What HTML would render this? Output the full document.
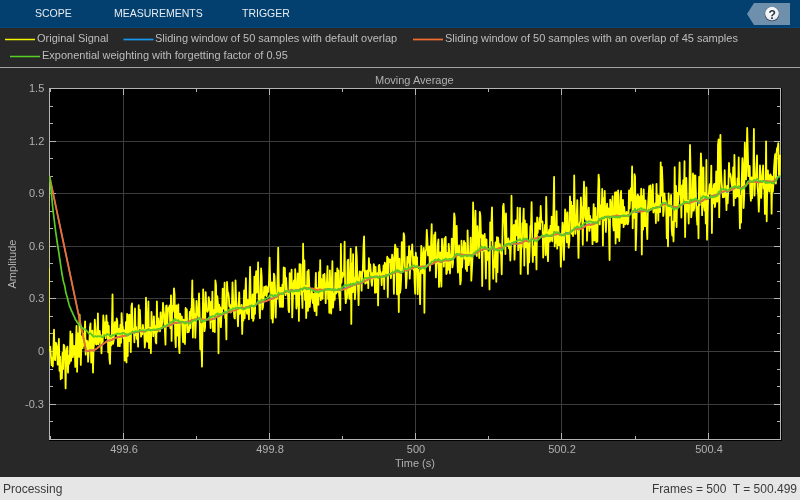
<!DOCTYPE html>
<html><head><meta charset="utf-8">
<style>
html,body{-webkit-font-smoothing:antialiased;margin:0;padding:0;width:800px;height:500px;overflow:hidden;background:#282828;font-family:"Liberation Sans",sans-serif;}
.tb{position:absolute;left:0;top:0;width:800px;height:28px;background:#03406f;}
.tab{position:absolute;top:7px;font-size:10.5px;color:#e6ecf2;line-height:12px;will-change:transform;}
.leg{position:absolute;font-size:11px;color:#bdbdbd;line-height:12px;white-space:nowrap;will-change:transform;}
.sw{position:absolute;height:2px;}
.sep{position:absolute;left:0;top:67px;width:800px;height:1px;background:#a4a4a4;}
.lbl{position:absolute;font-size:11px;color:#b0b0b0;line-height:12px;white-space:nowrap;will-change:transform;}
.status{position:absolute;left:0;top:477px;width:800px;height:23px;background:#e6e6e6;}
.st{position:absolute;font-size:12px;color:#3a3a3a;line-height:14px;white-space:nowrap;top:482px;will-change:transform;}
</style></head><body>
<div class="tb"></div><div style="position:absolute;left:0;top:27px;width:800px;height:1px;background:#05477f"></div><div style="position:absolute;left:0;top:28px;width:800px;height:1px;background:#2b2725"></div>
<div class="tab" style="left:35px">SCOPE</div>
<div class="tab" style="left:114px">MEASUREMENTS</div>
<div class="tab" style="left:242px">TRIGGER</div>
<svg style="position:absolute;left:0;top:0" width="800" height="30">
  <polygon points="754,3 790,3 790,25 754,25 747,14" fill="#6f90ad"/>
  <defs><radialGradient id="hg" cx="0.45" cy="0.35" r="0.75"><stop offset="0" stop-color="#ffffff"/><stop offset="0.7" stop-color="#eceef0"/><stop offset="1" stop-color="#b8c0c8"/></radialGradient></defs>
  <circle cx="772" cy="14" r="7.3" fill="#2a3c52"/>
  <circle cx="772" cy="13.6" r="6.9" fill="url(#hg)"/>
  <text x="772.2" y="18.7" font-family="Liberation Sans" font-weight="bold" font-size="13.5" fill="#223246" text-anchor="middle" transform="translate(772.2 0) scale(0.9 1) translate(-772.2 0)">?</text>
</svg>

<svg style="position:absolute;left:0;top:28px" width="800" height="40">
  <g stroke-width="1.7" stroke-linecap="butt">
  <line x1="5" y1="11.5" x2="35" y2="11.5" stroke="#f5f500" stroke-width="1.5"/>
  <line x1="123.5" y1="11.5" x2="153.5" y2="11.5" stroke="#1898f0"/>
  <line x1="413" y1="11.5" x2="443" y2="11.5" stroke="#f26d2e"/>
  <line x1="10" y1="28.5" x2="40" y2="28.5" stroke="#58d020" stroke-width="1.5"/>
  </g>
</svg>
<div class="leg" style="left:37px;top:32px">Original Signal</div>
<div class="leg" style="left:155px;top:32px">Sliding window of 50 samples with default overlap</div>
<div class="leg" style="left:444.5px;top:32px">Sliding window of 50 samples with an overlap of 45 samples</div>
<div class="leg" style="left:42px;top:49px">Exponential weighting with forgetting factor of 0.95</div>
<div class="sep"></div>

<div class="lbl" style="left:375px;top:74px">Moving Average</div>

<svg style="position:absolute;left:0;top:0" width="800" height="477" shape-rendering="crispEdges">
  <rect x="49" y="88" width="733" height="353" fill="#000"/>
  <g stroke="#3c3c3c" stroke-width="1"><line x1="123.5" y1="88" x2="123.5" y2="439"/><line x1="269.5" y1="88" x2="269.5" y2="439"/><line x1="415.5" y1="88" x2="415.5" y2="439"/><line x1="561.5" y1="88" x2="561.5" y2="439"/><line x1="708.5" y1="88" x2="708.5" y2="439"/><line x1="49" y1="141.5" x2="780" y2="141.5"/><line x1="49" y1="193.5" x2="780" y2="193.5"/><line x1="49" y1="246.5" x2="780" y2="246.5"/><line x1="49" y1="298.5" x2="780" y2="298.5"/><line x1="49" y1="351.5" x2="780" y2="351.5"/><line x1="49" y1="404.5" x2="780" y2="404.5"/></g>
  <g stroke="#b4b4b4" stroke-width="1"><line x1="50" y1="439.5" x2="53" y2="439.5"/><line x1="777" y1="439.5" x2="780" y2="439.5"/><line x1="50" y1="421.5" x2="53" y2="421.5"/><line x1="777" y1="421.5" x2="780" y2="421.5"/><line x1="50" y1="404.5" x2="56" y2="404.5"/><line x1="774" y1="404.5" x2="780" y2="404.5"/><line x1="50" y1="386.5" x2="53" y2="386.5"/><line x1="777" y1="386.5" x2="780" y2="386.5"/><line x1="50" y1="369.5" x2="53" y2="369.5"/><line x1="777" y1="369.5" x2="780" y2="369.5"/><line x1="50" y1="351.5" x2="56" y2="351.5"/><line x1="774" y1="351.5" x2="780" y2="351.5"/><line x1="50" y1="333.5" x2="53" y2="333.5"/><line x1="777" y1="333.5" x2="780" y2="333.5"/><line x1="50" y1="316.5" x2="53" y2="316.5"/><line x1="777" y1="316.5" x2="780" y2="316.5"/><line x1="50" y1="298.5" x2="56" y2="298.5"/><line x1="774" y1="298.5" x2="780" y2="298.5"/><line x1="50" y1="281.5" x2="53" y2="281.5"/><line x1="777" y1="281.5" x2="780" y2="281.5"/><line x1="50" y1="263.5" x2="53" y2="263.5"/><line x1="777" y1="263.5" x2="780" y2="263.5"/><line x1="50" y1="246.5" x2="56" y2="246.5"/><line x1="774" y1="246.5" x2="780" y2="246.5"/><line x1="50" y1="228.5" x2="53" y2="228.5"/><line x1="777" y1="228.5" x2="780" y2="228.5"/><line x1="50" y1="211.5" x2="53" y2="211.5"/><line x1="777" y1="211.5" x2="780" y2="211.5"/><line x1="50" y1="193.5" x2="56" y2="193.5"/><line x1="774" y1="193.5" x2="780" y2="193.5"/><line x1="50" y1="176.5" x2="53" y2="176.5"/><line x1="777" y1="176.5" x2="780" y2="176.5"/><line x1="50" y1="158.5" x2="53" y2="158.5"/><line x1="777" y1="158.5" x2="780" y2="158.5"/><line x1="50" y1="141.5" x2="56" y2="141.5"/><line x1="774" y1="141.5" x2="780" y2="141.5"/><line x1="50" y1="123.5" x2="53" y2="123.5"/><line x1="777" y1="123.5" x2="780" y2="123.5"/><line x1="50" y1="106.5" x2="53" y2="106.5"/><line x1="777" y1="106.5" x2="780" y2="106.5"/><line x1="50" y1="88.5" x2="56" y2="88.5"/><line x1="774" y1="88.5" x2="780" y2="88.5"/><line x1="50.5" y1="436" x2="50.5" y2="439"/><line x1="50.5" y1="89" x2="50.5" y2="92"/><line x1="123.5" y1="433" x2="123.5" y2="439"/><line x1="123.5" y1="89" x2="123.5" y2="95"/><line x1="196.5" y1="436" x2="196.5" y2="439"/><line x1="196.5" y1="89" x2="196.5" y2="92"/><line x1="269.5" y1="433" x2="269.5" y2="439"/><line x1="269.5" y1="89" x2="269.5" y2="95"/><line x1="342.5" y1="436" x2="342.5" y2="439"/><line x1="342.5" y1="89" x2="342.5" y2="92"/><line x1="415.5" y1="433" x2="415.5" y2="439"/><line x1="415.5" y1="89" x2="415.5" y2="95"/><line x1="488.5" y1="436" x2="488.5" y2="439"/><line x1="488.5" y1="89" x2="488.5" y2="92"/><line x1="561.5" y1="433" x2="561.5" y2="439"/><line x1="561.5" y1="89" x2="561.5" y2="95"/><line x1="635.5" y1="436" x2="635.5" y2="439"/><line x1="635.5" y1="89" x2="635.5" y2="92"/><line x1="708.5" y1="433" x2="708.5" y2="439"/><line x1="708.5" y1="89" x2="708.5" y2="95"/></g>
</svg>
<svg style="position:absolute;left:0;top:0" width="800" height="477" shape-rendering="crispEdges">
  <g fill="none" stroke="#b4b4b4" stroke-width="1">
    <rect x="49.5" y="88.5" width="731" height="351"/>
  </g>
</svg>
<svg style="position:absolute;left:0;top:0" width="800" height="477">
  <defs><clipPath id="cp"><rect x="49" y="88" width="732" height="352"/></clipPath></defs>
  <g clip-path="url(#cp)" fill="none" stroke-linejoin="round">
    <line x1="49.5" y1="176" x2="49.5" y2="268" stroke="#ffff00" stroke-opacity="0.2" stroke-width="1"/><line x1="49.5" y1="268" x2="49.5" y2="351" stroke="#ffff00" stroke-opacity="0.7" stroke-width="1"/>
    <path d="M49.7,351.5 50.3,346.7 50.9,355.6 51.6,365.1 52.2,358.2 52.8,366.5 53.4,349.8 54.0,329.7 54.6,358.3 55.2,360.1 55.8,342.6 56.4,344.6 57.0,348.4 57.7,364.6 58.3,350.3 58.9,338.8 59.5,370.8 60.1,356.7 60.7,379.3 61.3,369.6 61.9,378.2 62.5,352.9 63.1,369.0 63.7,344.7 64.4,346.4 65.0,351.8 65.6,388.4 66.2,357.1 66.8,349.3 67.4,346.7 68.0,372.6 68.6,355.9 69.2,363.7 69.8,361.0 70.4,331.3 71.1,360.8 71.7,348.5 72.3,333.9 72.9,357.1 73.5,349.5 74.1,345.9 74.7,346.6 75.3,366.9 75.9,346.2 76.5,325.8 77.1,371.8 77.8,333.4 78.4,344.9 79.0,356.8 79.6,314.6 80.2,334.0 80.8,364.9 81.4,344.5 82.0,336.2 82.6,348.1 83.2,334.0 83.8,345.7 84.5,333.8 85.1,321.3 85.7,354.7 86.3,340.4 86.9,350.8 87.5,341.1 88.1,361.8 88.7,351.8 89.3,345.5 89.9,327.7 90.5,323.5 91.2,362.6 91.8,353.9 92.4,330.6 93.0,372.5 93.6,347.8 94.2,341.6 94.8,319.6 95.4,328.3 96.0,344.2 96.6,344.5 97.2,342.2 97.9,313.4 98.5,344.3 99.1,341.9 99.7,331.0 100.3,338.2 100.9,339.0 101.5,353.3 102.1,335.2 102.7,341.7 103.3,315.5 103.9,323.3 104.6,333.8 105.2,322.3 105.8,338.1 106.4,315.3 107.0,331.9 107.6,322.3 108.2,352.3 108.8,325.8 109.4,358.5 110.0,363.9 110.6,335.9 111.3,345.4 111.9,328.1 112.5,294.4 113.1,343.9 113.7,340.4 114.3,326.9 114.9,322.2 115.5,332.9 116.1,333.2 116.7,318.4 117.3,321.2 118.0,346.2 118.6,330.7 119.2,328.7 119.8,346.2 120.4,324.8 121.0,342.8 121.6,313.1 122.2,325.5 122.8,327.1 123.4,338.0 124.0,330.2 124.7,360.6 125.3,346.4 125.9,322.1 126.5,362.4 127.1,314.0 127.7,356.0 128.3,315.2 128.9,341.1 129.5,314.6 130.1,325.0 130.8,352.0 131.4,306.6 132.0,303.4 132.6,327.8 133.2,331.1 133.8,329.1 134.4,342.3 135.0,308.4 135.6,335.0 136.2,326.9 136.8,338.9 137.5,336.1 138.1,346.7 138.7,305.2 139.3,328.2 139.9,309.8 140.5,325.3 141.1,336.7 141.7,330.6 142.3,334.4 142.9,325.0 143.5,331.2 144.2,329.9 144.8,347.5 145.4,338.1 146.0,297.7 146.6,335.7 147.2,341.9 147.8,319.0 148.4,301.4 149.0,348.2 149.6,327.7 150.2,334.6 150.9,353.1 151.5,312.0 152.1,324.4 152.7,322.8 153.3,336.2 153.9,316.3 154.5,332.6 155.1,326.0 155.7,341.8 156.3,343.5 156.9,301.4 157.6,331.7 158.2,318.4 158.8,323.6 159.4,330.2 160.0,331.2 160.6,312.4 161.2,327.6 161.8,325.0 162.4,322.0 163.0,302.9 163.6,310.9 164.3,315.7 164.9,331.2 165.5,344.6 166.1,305.9 166.7,305.5 167.3,323.7 167.9,312.2 168.5,308.1 169.1,307.1 169.7,305.5 170.3,328.1 171.0,295.3 171.6,340.9 172.2,305.8 172.8,311.7 173.4,305.3 174.0,288.4 174.6,294.8 175.2,338.3 175.8,347.1 176.4,305.4 177.0,335.6 177.7,318.8 178.3,304.5 178.9,345.6 179.5,353.2 180.1,313.6 180.7,317.0 181.3,321.6 181.9,316.7 182.5,331.5 183.1,342.3 183.7,319.7 184.4,332.9 185.0,343.9 185.6,307.9 186.2,317.2 186.8,309.3 187.4,332.4 188.0,326.7 188.6,332.2 189.2,330.1 189.8,311.9 190.4,328.0 191.1,308.8 191.7,308.9 192.3,280.5 192.9,337.5 193.5,299.2 194.1,315.4 194.7,314.0 195.3,337.8 195.9,321.1 196.5,300.8 197.1,314.5 197.8,311.6 198.4,317.7 199.0,293.3 199.6,312.9 200.2,349.3 200.8,323.9 201.4,345.2 202.0,366.6 202.6,320.8 203.2,289.3 203.9,310.8 204.5,331.2 205.1,327.2 205.7,292.2 206.3,308.5 206.9,310.2 207.5,311.8 208.1,310.2 208.7,297.1 209.3,301.3 209.9,306.9 210.6,328.0 211.2,301.7 211.8,321.7 212.4,291.6 213.0,331.4 213.6,312.2 214.2,309.9 214.8,332.1 215.4,280.5 216.0,284.8 216.6,317.2 217.3,296.2 217.9,302.7 218.5,353.3 219.1,304.7 219.7,310.0 220.3,307.5 220.9,327.1 221.5,313.4 222.1,311.8 222.7,288.6 223.3,303.1 224.0,308.8 224.6,282.7 225.2,318.0 225.8,315.2 226.4,339.4 227.0,281.8 227.6,292.1 228.2,292.8 228.8,297.0 229.4,306.4 230.0,304.6 230.7,312.5 231.3,311.6 231.9,307.2 232.5,282.3 233.1,298.5 233.7,308.9 234.3,317.7 234.9,318.6 235.5,280.3 236.1,299.0 236.7,306.4 237.4,313.4 238.0,326.3 238.6,308.4 239.2,292.3 239.8,313.8 240.4,310.9 241.0,310.7 241.6,305.0 242.2,333.9 242.8,310.3 243.4,320.5 244.1,290.3 244.7,318.3 245.3,294.8 245.9,278.2 246.5,309.3 247.1,313.8 247.7,299.8 248.3,302.7 248.9,319.3 249.5,294.0 250.1,266.9 250.8,305.5 251.4,304.1 252.0,318.2 252.6,294.4 253.2,320.9 253.8,318.0 254.4,276.6 255.0,313.8 255.6,279.2 256.2,271.1 256.8,292.5 257.5,287.0 258.1,262.5 258.7,299.1 259.3,305.5 259.9,318.2 260.5,293.7 261.1,268.5 261.7,277.0 262.3,309.4 262.9,307.5 263.5,301.0 264.2,286.9 264.8,295.3 265.4,287.8 266.0,286.2 266.6,296.2 267.2,291.6 267.8,287.1 268.4,291.9 269.0,281.5 269.6,257.6 270.2,279.5 270.9,288.6 271.5,318.5 272.1,282.4 272.7,322.6 273.3,313.1 273.9,273.6 274.5,276.0 275.1,290.6 275.7,317.5 276.3,294.0 277.0,299.1 277.6,276.1 278.2,247.7 278.8,282.9 279.4,300.2 280.0,307.0 280.6,287.6 281.2,289.8 281.8,306.8 282.4,284.7 283.0,306.8 283.7,267.4 284.3,268.3 284.9,267.9 285.5,295.1 286.1,277.9 286.7,289.2 287.3,293.7 287.9,292.9 288.5,309.7 289.1,312.2 289.7,273.2 290.4,290.4 291.0,283.3 291.6,269.6 292.2,317.4 292.8,300.9 293.4,284.1 294.0,280.3 294.6,293.8 295.2,269.2 295.8,283.6 296.4,308.5 297.1,303.6 297.7,273.3 298.3,279.4 298.9,320.9 299.5,264.1 300.1,277.3 300.7,264.3 301.3,294.7 301.9,293.2 302.5,307.9 303.1,243.7 303.8,291.4 304.4,260.5 305.0,299.9 305.6,285.7 306.2,318.1 306.8,295.5 307.4,271.5 308.0,310.8 308.6,269.8 309.2,282.8 309.8,307.0 310.5,297.5 311.1,296.7 311.7,289.4 312.3,298.0 312.9,303.1 313.5,293.8 314.1,306.6 314.7,311.2 315.3,289.2 315.9,272.8 316.5,315.3 317.2,288.1 317.8,299.4 318.4,304.9 319.0,272.2 319.6,296.2 320.2,260.2 320.8,300.2 321.4,279.2 322.0,289.8 322.6,298.8 323.2,274.8 323.9,287.6 324.5,273.9 325.1,285.1 325.7,303.2 326.3,285.5 326.9,282.5 327.5,266.1 328.1,298.9 328.7,283.2 329.3,312.8 329.9,270.4 330.6,300.9 331.2,313.5 331.8,282.2 332.4,261.2 333.0,307.7 333.6,299.7 334.2,293.3 334.8,299.9 335.4,272.8 336.0,293.6 336.6,291.8 337.3,268.3 337.9,291.9 338.5,270.5 339.1,295.3 339.7,299.3 340.3,310.2 340.9,244.0 341.5,282.7 342.1,272.4 342.7,277.0 343.3,273.4 344.0,275.1 344.6,241.6 345.2,294.1 345.8,303.1 346.4,293.1 347.0,298.7 347.6,261.2 348.2,259.7 348.8,291.4 349.4,298.9 350.1,280.1 350.7,248.6 351.3,323.9 351.9,263.7 352.5,292.3 353.1,254.1 353.7,291.9 354.3,277.5 354.9,299.3 355.5,289.6 356.1,246.9 356.8,256.9 357.4,278.7 358.0,286.9 358.6,305.1 359.2,278.0 359.8,271.4 360.4,272.2 361.0,272.3 361.6,290.7 362.2,271.5 362.8,270.9 363.5,246.9 364.1,236.4 364.7,272.4 365.3,283.6 365.9,270.8 366.5,280.5 367.1,282.8 367.7,270.4 368.3,288.1 368.9,258.2 369.5,270.9 370.2,264.4 370.8,272.1 371.4,281.9 372.0,285.8 372.6,272.8 373.2,278.4 373.8,264.1 374.4,268.3 375.0,292.8 375.6,266.8 376.2,292.3 376.9,279.1 377.5,273.2 378.1,305.4 378.7,266.0 379.3,264.9 379.9,270.4 380.5,275.2 381.1,274.2 381.7,285.1 382.3,272.2 382.9,277.2 383.6,265.5 384.2,289.0 384.8,262.7 385.4,264.3 386.0,269.5 386.6,274.8 387.2,256.7 387.8,297.0 388.4,258.3 389.0,262.2 389.6,261.4 390.3,259.5 390.9,278.3 391.5,271.1 392.1,254.7 392.7,258.4 393.3,262.4 393.9,293.8 394.5,256.3 395.1,244.7 395.7,247.5 396.3,261.6 397.0,294.3 397.6,248.6 398.2,268.4 398.8,312.0 399.4,258.7 400.0,292.9 400.6,289.2 401.2,277.1 401.8,242.1 402.4,272.1 403.0,260.3 403.7,233.2 404.3,235.9 404.9,267.0 405.5,269.4 406.1,288.1 406.7,277.6 407.3,257.0 407.9,257.4 408.5,262.6 409.1,246.2 409.7,278.6 410.4,265.3 411.0,250.8 411.6,253.4 412.2,244.3 412.8,256.6 413.4,269.5 414.0,257.0 414.6,282.0 415.2,293.7 415.8,252.7 416.4,264.3 417.1,257.5 417.7,294.3 418.3,269.7 418.9,273.9 419.5,278.7 420.1,304.2 420.7,268.7 421.3,245.8 421.9,255.2 422.5,273.3 423.2,262.3 423.8,248.0 424.4,312.8 425.0,264.0 425.6,251.6 426.2,248.9 426.8,229.9 427.4,240.3 428.0,255.4 428.6,255.4 429.2,246.3 429.9,270.8 430.5,261.4 431.1,243.8 431.7,224.1 432.3,263.2 432.9,261.1 433.5,256.4 434.1,235.0 434.7,260.3 435.3,232.4 435.9,277.4 436.6,262.8 437.2,262.9 437.8,244.5 438.4,239.5 439.0,286.9 439.6,275.7 440.2,252.3 440.8,270.7 441.4,286.6 442.0,238.8 442.6,248.8 443.3,248.7 443.9,266.6 444.5,238.4 445.1,261.9 445.7,236.8 446.3,274.1 446.9,272.9 447.5,253.0 448.1,269.8 448.7,243.9 449.3,251.5 450.0,273.4 450.6,254.7 451.2,262.5 451.8,238.6 452.4,267.4 453.0,263.7 453.6,232.6 454.2,213.3 454.8,217.6 455.4,253.6 456.0,250.6 456.7,225.8 457.3,256.7 457.9,272.5 458.5,251.8 459.1,245.4 459.7,269.2 460.3,284.4 460.9,280.3 461.5,240.7 462.1,267.3 462.7,255.5 463.4,248.7 464.0,240.9 464.6,258.7 465.2,242.9 465.8,268.8 466.4,258.7 467.0,271.0 467.6,230.3 468.2,251.9 468.8,265.1 469.4,257.7 470.1,255.1 470.7,237.6 471.3,280.7 471.9,270.0 472.5,257.4 473.1,202.4 473.7,231.9 474.3,251.9 474.9,236.2 475.5,210.7 476.1,253.7 476.8,256.1 477.4,226.1 478.0,239.5 478.6,236.0 479.2,258.1 479.8,211.9 480.4,215.8 481.0,237.3 481.6,234.8 482.2,286.0 482.8,235.4 483.5,250.9 484.1,238.9 484.7,234.0 485.3,253.2 485.9,278.6 486.5,239.5 487.1,260.3 487.7,252.4 488.3,257.4 488.9,252.2 489.5,289.4 490.2,222.3 490.8,240.4 491.4,224.0 492.0,207.3 492.6,244.3 493.2,278.8 493.8,261.4 494.4,267.2 495.0,253.6 495.6,242.4 496.3,281.8 496.9,237.1 497.5,272.2 498.1,237.6 498.7,245.2 499.3,248.9 499.9,244.2 500.5,252.9 501.1,254.1 501.7,274.3 502.3,242.7 503.0,206.7 503.6,204.0 504.2,216.3 504.8,227.9 505.4,254.1 506.0,213.5 506.6,241.9 507.2,242.0 507.8,246.0 508.4,238.5 509.0,248.4 509.7,241.5 510.3,260.5 510.9,246.7 511.5,195.7 512.1,240.5 512.7,243.5 513.3,228.6 513.9,225.0 514.5,259.7 515.1,242.2 515.7,220.4 516.4,232.6 517.0,235.3 517.6,207.6 518.2,250.2 518.8,235.4 519.4,246.8 520.0,208.0 520.6,273.9 521.2,249.1 521.8,246.2 522.4,223.1 523.1,223.9 523.7,208.6 524.3,265.5 524.9,220.5 525.5,240.4 526.1,247.4 526.7,224.0 527.3,251.9 527.9,273.9 528.5,240.9 529.1,262.4 529.8,245.8 530.4,225.9 531.0,226.9 531.6,202.1 532.2,236.4 532.8,261.9 533.4,246.7 534.0,249.7 534.6,255.2 535.2,223.1 535.8,243.8 536.5,269.4 537.1,217.5 537.7,232.9 538.3,223.7 538.9,228.4 539.5,218.0 540.1,229.3 540.7,206.0 541.3,221.5 541.9,222.0 542.5,221.5 543.2,257.5 543.8,232.3 544.4,234.0 545.0,224.8 545.6,255.0 546.2,196.8 546.8,226.3 547.4,251.7 548.0,261.2 548.6,233.4 549.2,229.6 549.9,241.7 550.5,225.8 551.1,239.9 551.7,216.6 552.3,241.3 552.9,227.9 553.5,208.0 554.1,176.8 554.7,246.4 555.3,235.7 555.9,242.9 556.6,211.1 557.2,248.7 557.8,235.6 558.4,226.7 559.0,245.1 559.6,244.6 560.2,235.1 560.8,266.7 561.4,253.8 562.0,233.6 562.6,222.6 563.3,229.0 563.9,259.9 564.5,234.3 565.1,209.5 565.7,214.2 566.3,226.5 566.9,242.3 567.5,212.5 568.1,236.1 568.7,247.6 569.4,240.4 570.0,196.3 570.6,220.2 571.2,201.8 571.8,233.8 572.4,206.0 573.0,236.1 573.6,227.3 574.2,175.4 574.8,209.1 575.4,233.9 576.1,225.6 576.7,217.5 577.3,200.1 577.9,233.4 578.5,257.9 579.1,229.1 579.7,223.2 580.3,221.3 580.9,197.5 581.5,217.1 582.1,207.2 582.8,244.8 583.4,205.9 584.0,181.7 584.6,207.6 585.2,217.8 585.8,219.7 586.4,187.4 587.0,240.8 587.6,224.7 588.2,213.3 588.8,207.6 589.5,230.8 590.1,216.0 590.7,227.5 591.3,219.5 591.9,224.4 592.5,244.2 593.1,222.0 593.7,204.1 594.3,240.4 594.9,226.0 595.5,207.9 596.2,242.1 596.8,217.2 597.4,241.6 598.0,198.1 598.6,174.6 599.2,180.2 599.8,224.4 600.4,205.3 601.0,217.4 601.6,217.6 602.2,188.8 602.9,245.5 603.5,198.3 604.1,220.0 604.7,191.0 605.3,215.0 605.9,231.9 606.5,212.9 607.1,203.7 607.7,217.4 608.3,208.3 608.9,228.2 609.6,260.0 610.2,199.6 610.8,203.4 611.4,214.2 612.0,215.6 612.6,196.2 613.2,225.7 613.8,230.5 614.4,220.1 615.0,192.4 615.6,243.6 616.3,192.1 616.9,228.4 617.5,237.5 618.1,190.3 618.7,217.2 619.3,241.0 619.9,222.1 620.5,196.2 621.1,190.9 621.7,223.1 622.3,206.3 623.0,200.0 623.6,227.0 624.2,206.8 624.8,214.4 625.4,224.4 626.0,223.3 626.6,212.0 627.2,212.6 627.8,224.4 628.4,221.4 629.0,190.5 629.7,208.3 630.3,194.7 630.9,188.2 631.5,200.3 632.1,166.4 632.7,228.3 633.3,195.4 633.9,217.8 634.5,174.1 635.1,177.0 635.7,250.2 636.4,230.3 637.0,197.3 637.6,194.6 638.2,195.5 638.8,211.5 639.4,200.8 640.0,196.6 640.6,211.1 641.2,188.7 641.8,254.6 642.5,196.2 643.1,229.6 643.7,189.3 644.3,213.0 644.9,226.1 645.5,200.5 646.1,226.2 646.7,226.0 647.3,239.0 647.9,207.8 648.5,197.1 649.2,186.2 649.8,209.6 650.4,185.4 651.0,206.0 651.6,208.0 652.2,194.4 652.8,184.4 653.4,212.5 654.0,210.3 654.6,208.4 655.2,203.3 655.9,223.0 656.5,183.8 657.1,212.5 657.7,194.9 658.3,220.7 658.9,196.6 659.5,195.7 660.1,212.0 660.7,162.3 661.3,195.6 661.9,166.9 662.6,183.3 663.2,216.0 663.8,210.1 664.4,193.4 665.0,200.8 665.6,200.9 666.2,207.5 666.8,238.3 667.4,206.0 668.0,246.3 668.6,193.5 669.3,215.6 669.9,215.3 670.5,205.0 671.1,194.9 671.7,229.4 672.3,235.7 672.9,221.7 673.5,241.4 674.1,219.4 674.7,167.2 675.3,221.0 676.0,186.0 676.6,227.1 677.2,192.9 677.8,205.4 678.4,199.9 679.0,186.9 679.6,162.5 680.2,194.1 680.8,195.3 681.4,217.5 682.0,185.5 682.7,202.3 683.3,180.1 683.9,197.8 684.5,161.1 685.1,237.0 685.7,202.3 686.3,178.0 686.9,203.0 687.5,211.9 688.1,200.9 688.7,223.5 689.4,192.7 690.0,144.9 690.6,171.3 691.2,217.3 691.8,212.3 692.4,202.5 693.0,173.4 693.6,210.7 694.2,207.8 694.8,175.3 695.4,175.6 696.1,200.8 696.7,215.9 697.3,224.6 697.9,207.0 698.5,238.3 699.1,176.9 699.7,205.1 700.3,182.1 700.9,153.4 701.5,167.5 702.1,215.2 702.8,173.4 703.4,167.3 704.0,206.4 704.6,210.5 705.2,192.9 705.8,223.5 706.4,160.0 707.0,239.7 707.6,212.8 708.2,195.4 708.8,194.4 709.5,186.1 710.1,183.8 710.7,193.6 711.3,165.6 711.9,233.1 712.5,188.8 713.1,203.4 713.7,185.7 714.3,183.8 714.9,207.0 715.6,201.3 716.2,171.5 716.8,180.5 717.4,201.6 718.0,145.2 718.6,139.4 719.2,217.3 719.8,180.7 720.4,134.8 721.0,170.3 721.6,181.8 722.3,190.6 722.9,197.3 723.5,190.4 724.1,197.2 724.7,170.2 725.3,193.7 725.9,194.4 726.5,210.1 727.1,186.0 727.7,203.3 728.3,188.3 729.0,162.8 729.6,176.6 730.2,173.6 730.8,176.5 731.4,182.5 732.0,186.2 732.6,189.7 733.2,167.3 733.8,205.5 734.4,154.8 735.0,181.8 735.7,198.0 736.3,192.4 736.9,196.1 737.5,178.4 738.1,196.5 738.7,157.5 739.3,197.5 739.9,228.4 740.5,196.0 741.1,222.5 741.7,181.3 742.4,158.2 743.0,166.7 743.6,208.0 744.2,195.9 744.8,142.7 745.4,173.1 746.0,179.5 746.6,157.4 747.2,128.0 747.8,152.1 748.4,176.2 749.1,171.6 749.7,165.9 750.3,191.6 750.9,200.8 751.5,177.4 752.1,198.2 752.7,179.5 753.3,176.1 753.9,128.9 754.5,195.7 755.1,180.3 755.8,181.1 756.4,168.4 757.0,155.5 757.6,187.6 758.2,194.5 758.8,211.6 759.4,196.4 760.0,165.5 760.6,175.7 761.2,197.9 761.8,184.2 762.5,175.6 763.1,165.5 763.7,188.4 764.3,181.0 764.9,213.9 765.5,199.7 766.1,141.3 766.7,221.3 767.3,182.2 767.9,170.3 768.5,182.7 769.2,191.7 769.8,175.8 770.4,174.4 771.0,175.9 771.6,213.7 772.2,177.0 772.8,191.8 773.4,185.2 774.0,168.7 774.6,159.8 775.2,154.2 775.9,183.5 776.5,153.4 777.1,148.0 777.7,148.6 778.3,143.1 778.9,175.4 779.5,175.9 780.1,154.6" stroke="#ffff00" stroke-width="1.8"/>
    <path d="M49.5,176.2 86.3,351.4 86.9,351.5 87.5,351.2 88.1,351.2 88.7,351.1 89.3,350.7 89.9,350.4 90.5,350.3 91.2,350.3 91.8,350.2 92.4,350.0 93.0,350.5 93.6,350.5 94.2,350.1 94.8,349.6 95.4,349.4 96.0,349.0 96.6,348.8 97.2,348.2 97.9,347.2 98.5,346.6 99.1,346.5 99.7,345.8 100.3,345.7 100.9,345.6 101.5,345.6 102.1,344.7 102.7,344.5 103.3,343.9 103.9,343.5 104.6,342.9 105.2,342.3 105.8,341.9 106.4,341.1 107.0,341.1 107.6,340.5 108.2,340.6 108.8,340.4 109.4,340.4 110.0,340.7 110.6,340.5 111.3,340.5 111.9,339.9 112.5,339.0 113.1,339.3 113.7,338.8 114.3,338.7 114.9,338.3 115.5,337.9 116.1,338.2 116.7,337.9 117.3,337.2 118.0,337.2 118.6,337.1 119.2,336.8 119.8,337.0 120.4,336.7 121.0,336.8 121.6,336.7 122.2,336.2 122.8,336.0 123.4,335.8 124.0,335.6 124.7,335.6 125.3,335.5 125.9,335.1 126.5,335.7 127.1,335.5 127.7,335.4 128.3,334.8 128.9,334.9 129.5,334.0 130.1,333.6 130.8,333.8 131.4,333.5 132.0,333.1 132.6,332.9 133.2,332.6 133.8,332.4 134.4,332.9 135.0,332.3 135.6,332.2 136.2,332.1 136.8,332.1 137.5,332.1 138.1,332.0 138.7,331.5 139.3,331.2 139.9,331.1 140.5,331.2 141.1,331.2 141.7,331.4 142.3,331.3 142.9,331.5 143.5,331.5 144.2,331.6 144.8,331.5 145.4,331.7 146.0,330.7 146.6,330.2 147.2,330.3 147.8,329.9 148.4,329.4 149.0,330.3 149.6,330.1 150.2,330.0 150.9,330.4 151.5,330.2 152.1,330.1 152.7,329.9 153.3,330.2 153.9,330.1 154.5,329.9 155.1,329.8 155.7,330.0 156.3,330.0 156.9,329.6 157.6,329.4 158.2,329.5 158.8,329.5 159.4,329.5 160.0,329.4 160.6,329.1 161.2,328.6 161.8,328.2 162.4,328.2 163.0,327.2 163.6,327.2 164.3,326.5 164.9,326.8 165.5,326.8 166.1,326.7 166.7,326.4 167.3,325.9 167.9,326.0 168.5,326.1 169.1,325.7 169.7,325.3 170.3,325.3 171.0,324.5 171.6,325.0 172.2,324.5 172.8,324.3 173.4,323.7 174.0,322.9 174.6,322.1 175.2,322.6 175.8,322.9 176.4,322.9 177.0,323.0 177.7,322.7 178.3,322.3 178.9,322.5 179.5,323.0 180.1,322.7 180.7,322.4 181.3,322.0 181.9,321.7 182.5,322.2 183.1,322.3 183.7,322.0 184.4,322.2 185.0,322.9 185.6,322.2 186.2,322.1 186.8,321.6 187.4,321.3 188.0,321.5 188.6,321.7 189.2,321.8 189.8,321.4 190.4,321.6 191.1,321.2 191.7,320.9 192.3,319.9 192.9,319.8 193.5,319.7 194.1,319.5 194.7,319.4 195.3,319.6 195.9,319.5 196.5,319.0 197.1,319.0 197.8,318.7 198.4,318.6 199.0,318.1 199.6,318.3 200.2,318.9 200.8,319.1 201.4,319.3 202.0,319.7 202.6,319.9 203.2,319.7 203.9,319.4 204.5,319.8 205.1,320.1 205.7,319.8 206.3,319.9 206.9,319.6 207.5,319.9 208.1,319.3 208.7,319.2 209.3,319.0 209.9,319.1 210.6,319.7 211.2,319.8 211.8,319.6 212.4,318.6 213.0,319.1 213.6,318.7 214.2,318.5 214.8,319.0 215.4,317.9 216.0,316.8 216.6,316.8 217.3,316.5 217.9,316.2 218.5,316.8 219.1,316.3 219.7,315.8 220.3,315.6 220.9,315.5 221.5,315.0 222.1,315.0 222.7,314.6 223.3,314.5 224.0,314.1 224.6,313.3 225.2,313.1 225.8,312.8 226.4,313.3 227.0,312.5 227.6,312.3 228.2,312.0 228.8,312.3 229.4,311.7 230.0,311.8 230.7,311.8 231.3,311.7 231.9,311.2 232.5,310.6 233.1,310.5 233.7,310.4 234.3,310.6 234.9,310.6 235.5,310.3 236.1,310.1 236.7,309.4 237.4,309.2 238.0,308.9 238.6,307.9 239.2,307.5 239.8,307.9 240.4,307.9 241.0,307.5 241.6,307.2 242.2,307.9 242.8,307.9 243.4,308.1 244.1,307.7 244.7,307.8 245.3,307.8 245.9,307.4 246.5,307.5 247.1,307.2 247.7,307.2 248.3,306.9 248.9,307.3 249.5,306.7 250.1,306.0 250.8,305.9 251.4,305.4 252.0,306.0 252.6,306.2 253.2,306.3 253.8,306.6 254.4,306.2 255.0,305.5 255.6,305.1 256.2,304.5 256.8,304.2 257.5,303.5 258.1,302.7 258.7,302.5 259.3,302.8 259.9,303.0 260.5,302.8 261.1,302.5 261.7,301.8 262.3,301.8 262.9,301.2 263.5,301.5 264.2,301.5 264.8,301.5 265.4,301.3 266.0,301.0 266.6,300.9 267.2,300.5 267.8,300.1 268.4,299.9 269.0,299.8 269.6,299.2 270.2,298.7 270.9,298.2 271.5,298.2 272.1,298.2 272.7,298.6 273.3,298.7 273.9,298.1 274.5,297.2 275.1,296.9 275.7,297.3 276.3,297.0 277.0,296.8 277.6,296.2 278.2,295.3 278.8,294.4 279.4,294.3 280.0,294.0 280.6,294.0 281.2,293.5 281.8,293.7 282.4,293.8 283.0,293.8 283.7,293.0 284.3,292.5 284.9,291.9 285.5,291.5 286.1,291.2 286.7,291.6 287.3,291.4 287.9,291.2 288.5,291.1 289.1,291.4 289.7,290.6 290.4,290.1 291.0,290.2 291.6,289.5 292.2,290.1 292.8,290.6 293.4,290.5 294.0,290.4 294.6,290.9 295.2,290.4 295.8,290.0 296.4,289.9 297.1,290.0 297.7,290.1 298.3,290.2 298.9,290.4 299.5,289.6 300.1,289.2 300.7,288.9 301.3,288.8 301.9,288.9 302.5,289.3 303.1,288.4 303.8,288.4 304.4,288.0 305.0,288.1 305.6,288.2 306.2,289.2 306.8,289.5 307.4,289.2 308.0,289.0 308.6,288.8 309.2,288.2 309.8,288.1 310.5,288.5 311.1,288.8 311.7,288.8 312.3,288.5 312.9,288.6 313.5,288.5 314.1,289.0 314.7,290.1 315.3,290.2 315.9,289.7 316.5,289.9 317.2,289.9 317.8,290.1 318.4,290.0 319.0,289.8 319.6,289.6 320.2,289.5 320.8,290.0 321.4,290.2 322.0,290.1 322.6,290.5 323.2,290.3 323.9,290.2 324.5,289.8 325.1,289.4 325.7,289.3 326.3,289.5 326.9,289.4 327.5,289.1 328.1,289.6 328.7,289.0 329.3,289.2 329.9,289.0 330.6,289.3 331.2,289.6 331.8,289.8 332.4,289.5 333.0,289.5 333.6,289.4 334.2,289.7 334.8,290.1 335.4,289.3 336.0,289.8 336.6,290.0 337.3,290.1 337.9,290.0 338.5,289.6 339.1,289.4 339.7,290.4 340.3,290.7 340.9,290.4 341.5,290.1 342.1,289.9 342.7,289.2 343.3,288.8 344.0,288.9 344.6,287.7 345.2,288.1 345.8,288.5 346.4,288.3 347.0,288.3 347.6,287.7 348.2,287.2 348.8,287.1 349.4,287.0 350.1,286.8 350.7,285.8 351.3,286.0 351.9,285.6 352.5,285.9 353.1,284.9 353.7,285.0 354.3,284.6 354.9,284.5 355.5,284.8 356.1,284.0 356.8,283.9 357.4,283.6 358.0,283.7 358.6,284.0 359.2,283.6 359.8,283.5 360.4,283.3 361.0,283.3 361.6,283.4 362.2,282.8 362.8,282.6 363.5,282.0 364.1,281.5 364.7,281.1 365.3,281.1 365.9,280.4 366.5,280.5 367.1,280.2 367.7,279.5 368.3,279.6 368.9,279.6 369.5,278.9 370.2,278.4 370.8,278.0 371.4,277.7 372.0,277.9 372.6,277.6 373.2,277.3 373.8,277.3 374.4,276.9 375.0,277.3 375.6,276.8 376.2,276.7 376.9,276.1 377.5,276.6 378.1,277.0 378.7,276.9 379.3,276.7 379.9,276.7 380.5,276.7 381.1,277.2 381.7,277.0 382.3,276.5 382.9,276.3 383.6,275.7 384.2,276.2 384.8,276.2 385.4,275.8 386.0,275.3 386.6,275.2 387.2,275.3 387.8,274.9 388.4,274.8 389.0,274.3 389.6,274.4 390.3,273.9 390.9,273.9 391.5,273.4 392.1,272.8 392.7,273.0 393.3,273.1 393.9,273.4 394.5,272.9 395.1,271.8 395.7,271.3 396.3,271.2 397.0,271.5 397.6,271.1 398.2,270.8 398.8,271.5 399.4,271.2 400.0,272.0 400.6,272.9 401.2,273.0 401.8,272.3 402.4,272.3 403.0,272.0 403.7,271.1 404.3,270.6 404.9,270.2 405.5,270.4 406.1,270.7 406.7,270.9 407.3,270.7 407.9,270.2 408.5,269.9 409.1,269.4 409.7,269.4 410.4,269.4 411.0,269.2 411.6,268.5 412.2,268.1 412.8,267.5 413.4,267.4 414.0,267.1 414.6,266.7 415.2,267.2 415.8,267.0 416.4,266.9 417.1,266.6 417.7,266.9 418.3,266.6 418.9,266.7 419.5,266.7 420.1,267.3 420.7,267.0 421.3,266.7 421.9,266.6 422.5,266.6 423.2,266.4 423.8,266.3 424.4,266.5 425.0,266.6 425.6,266.5 426.2,266.3 426.8,265.8 427.4,265.1 428.0,264.9 428.6,264.9 429.2,264.7 429.9,264.8 430.5,264.3 431.1,264.1 431.7,263.7 432.3,264.0 432.9,264.0 433.5,263.3 434.1,263.1 434.7,263.0 435.3,261.7 435.9,262.0 436.6,261.5 437.2,261.0 437.8,260.5 438.4,260.4 439.0,260.7 439.6,260.9 440.2,261.3 440.8,261.8 441.4,262.2 442.0,261.7 442.6,261.0 443.3,260.5 443.9,260.7 444.5,260.4 445.1,260.4 445.7,260.2 446.3,260.1 446.9,260.2 447.5,260.3 448.1,260.6 448.7,260.6 449.3,260.5 450.0,260.5 450.6,260.5 451.2,260.2 451.8,259.3 452.4,259.5 453.0,259.5 453.6,259.1 454.2,257.7 454.8,256.9 455.4,256.5 456.0,256.1 456.7,254.7 457.3,254.5 457.9,255.0 458.5,254.9 459.1,254.5 459.7,254.6 460.3,255.2 460.9,254.6 461.5,254.3 462.1,254.5 462.7,254.6 463.4,254.9 464.0,255.0 464.6,255.0 465.2,254.8 465.8,255.2 466.4,255.0 467.0,255.1 467.6,254.9 468.2,255.4 468.8,255.4 469.4,255.3 470.1,255.3 470.7,255.4 471.3,255.7 471.9,256.3 472.5,256.0 473.1,255.0 473.7,254.5 474.3,254.6 474.9,254.5 475.5,253.3 476.1,252.9 476.8,253.0 477.4,252.2 478.0,251.4 478.6,251.4 479.2,251.6 479.8,250.9 480.4,250.1 481.0,250.1 481.6,249.6 482.2,250.4 482.8,249.8 483.5,249.4 484.1,249.2 484.7,248.6 485.3,248.8 485.9,249.2 486.5,248.6 487.1,248.7 487.7,248.6 488.3,248.9 488.9,248.6 489.5,249.1 490.2,248.9 490.8,249.3 491.4,249.4 492.0,248.7 492.6,248.6 493.2,249.5 493.8,249.5 494.4,249.4 495.0,249.5 495.6,249.4 496.3,249.6 496.9,248.8 497.5,248.7 498.1,248.7 498.7,248.3 499.3,248.2 499.9,248.1 500.5,248.3 501.1,248.2 501.7,248.7 502.3,248.3 503.0,247.4 503.6,246.3 504.2,246.1 504.8,245.7 505.4,245.5 506.0,244.8 506.6,244.6 507.2,244.6 507.8,244.1 508.4,243.5 509.0,243.4 509.7,244.0 510.3,244.5 510.9,244.4 511.5,243.7 512.1,244.2 512.7,244.1 513.3,243.6 513.9,243.6 514.5,243.9 515.1,244.0 515.7,243.4 516.4,243.8 517.0,244.1 517.6,243.6 518.2,243.8 518.8,243.0 519.4,243.2 520.0,242.5 520.6,243.1 521.2,243.3 521.8,243.2 522.4,242.3 523.1,242.0 523.7,241.1 524.3,241.4 524.9,240.7 525.5,240.5 526.1,239.8 526.7,239.9 527.3,240.1 527.9,240.9 528.5,241.5 529.1,241.8 529.8,241.2 530.4,240.6 531.0,239.9 531.6,239.1 532.2,239.0 532.8,238.7 533.4,238.8 534.0,238.4 534.6,238.7 535.2,238.4 535.8,238.3 536.5,238.7 537.1,238.1 537.7,237.8 538.3,236.9 538.9,236.7 539.5,236.9 540.1,237.3 540.7,237.1 541.3,237.0 541.9,236.5 542.5,236.6 543.2,236.9 543.8,236.7 544.4,236.5 545.0,236.3 545.6,236.4 546.2,235.6 546.8,235.1 547.4,235.1 548.0,236.2 548.6,236.1 549.2,235.9 549.9,236.1 550.5,236.1 551.1,235.8 551.7,235.4 552.3,235.7 552.9,235.6 553.5,235.2 554.1,234.7 554.7,234.6 555.3,234.6 555.9,234.5 556.6,234.6 557.2,234.2 557.8,233.9 558.4,233.6 559.0,234.0 559.6,234.3 560.2,234.8 560.8,234.8 561.4,235.4 562.0,235.2 562.6,234.8 563.3,234.9 563.9,235.0 564.5,234.4 565.1,233.9 565.7,233.1 566.3,232.7 566.9,233.0 567.5,232.8 568.1,233.3 568.7,233.5 569.4,233.2 570.0,232.3 570.6,231.8 571.2,230.9 571.8,231.1 572.4,230.5 573.0,229.9 573.6,230.1 574.2,229.1 574.8,228.9 575.4,229.0 576.1,229.1 576.7,228.9 577.3,228.8 577.9,229.0 578.5,229.6 579.1,229.7 579.7,229.2 580.3,229.0 580.9,228.4 581.5,228.3 582.1,227.5 582.8,228.3 583.4,227.9 584.0,226.8 584.6,225.9 585.2,225.6 585.8,225.4 586.4,224.5 587.0,224.8 587.6,224.5 588.2,224.5 588.8,223.9 589.5,224.0 590.1,224.1 590.7,224.9 591.3,224.5 591.9,224.3 592.5,224.3 593.1,224.5 593.7,223.8 594.3,223.8 594.9,223.8 595.5,223.2 596.2,223.2 596.8,222.9 597.4,222.5 598.0,221.5 598.6,220.5 599.2,219.8 599.8,219.8 600.4,218.8 601.0,218.6 601.6,218.7 602.2,218.3 602.9,218.6 603.5,217.9 604.1,218.0 604.7,217.2 605.3,216.7 605.9,216.6 606.5,216.8 607.1,216.6 607.7,216.8 608.3,216.4 608.9,216.8 609.6,217.2 610.2,216.7 610.8,217.2 611.4,217.2 612.0,216.9 612.6,216.5 613.2,216.6 613.8,217.1 614.4,216.9 615.0,215.8 615.6,216.0 616.3,215.5 616.9,215.6 617.5,216.3 618.1,215.8 618.7,216.0 619.3,215.9 619.9,216.2 620.5,216.5 621.1,216.2 621.7,216.3 622.3,216.0 623.0,216.3 623.6,216.0 624.2,215.7 624.8,215.7 625.4,216.0 626.0,215.9 626.6,215.8 627.2,215.6 627.8,215.7 628.4,215.6 629.0,214.7 629.7,214.5 630.3,214.3 630.9,213.5 631.5,213.0 632.1,212.3 632.7,212.1 633.3,211.8 633.9,211.4 634.5,211.0 635.1,211.0 635.7,212.2 636.4,212.3 637.0,212.1 637.6,211.7 638.2,211.4 638.8,211.8 639.4,211.0 640.0,211.0 640.6,210.8 641.2,210.8 641.8,211.5 642.5,210.9 643.1,211.1 643.7,210.9 644.3,210.8 644.9,211.1 645.5,210.7 646.1,210.1 646.7,210.5 647.3,211.1 647.9,211.0 648.5,210.7 649.2,210.5 649.8,210.3 650.4,209.5 651.0,209.3 651.6,209.6 652.2,208.7 652.8,208.6 653.4,208.3 654.0,207.9 654.6,208.2 655.2,208.0 655.9,207.7 656.5,207.0 657.1,207.3 657.7,207.4 658.3,207.3 658.9,207.2 659.5,207.1 660.1,206.8 660.7,206.1 661.3,205.8 661.9,204.8 662.6,204.2 663.2,204.2 663.8,204.2 664.4,203.7 665.0,203.3 665.6,203.5 666.2,203.5 666.8,204.2 667.4,204.5 668.0,205.3 668.6,205.7 669.3,205.5 669.9,205.8 670.5,205.6 671.1,206.0 671.7,206.8 672.3,206.6 672.9,206.5 673.5,207.2 674.1,207.6 674.7,207.1 675.3,207.3 676.0,207.0 676.6,207.6 677.2,207.3 677.8,207.5 678.4,206.6 679.0,206.5 679.6,205.3 680.2,205.4 680.8,205.1 681.4,205.0 682.0,204.7 682.7,204.3 683.3,203.6 683.9,202.9 684.5,202.1 685.1,202.8 685.7,203.0 686.3,202.5 686.9,202.8 687.5,202.9 688.1,202.8 688.7,203.3 689.4,203.4 690.0,202.3 690.6,201.6 691.2,201.8 691.8,201.9 692.4,201.6 693.0,201.4 693.6,201.4 694.2,201.6 694.8,200.9 695.4,200.5 696.1,200.6 696.7,200.7 697.3,201.7 697.9,201.9 698.5,203.1 699.1,203.0 699.7,202.8 700.3,202.3 700.9,201.6 701.5,201.1 702.1,201.3 702.8,200.8 703.4,199.6 704.0,199.6 704.6,199.0 705.2,199.0 705.8,199.1 706.4,198.2 707.0,198.8 707.6,199.1 708.2,198.5 708.8,197.8 709.5,197.2 710.1,196.3 710.7,195.8 711.3,195.8 711.9,196.0 712.5,196.1 713.1,195.7 713.7,195.5 714.3,195.2 714.9,195.3 715.6,195.5 716.2,195.7 716.8,195.5 717.4,195.6 718.0,194.4 718.6,193.6 719.2,193.8 719.8,193.8 720.4,192.8 721.0,193.0 721.6,192.0 722.3,191.8 722.9,192.2 723.5,191.9 724.1,191.7 724.7,191.2 725.3,190.7 725.9,190.7 726.5,191.8 727.1,192.1 727.7,191.8 728.3,191.4 729.0,190.8 729.6,190.8 730.2,190.2 730.8,189.7 731.4,189.8 732.0,190.0 732.6,189.8 733.2,189.0 733.8,188.7 734.4,187.8 735.0,186.8 735.7,187.2 736.3,187.0 736.9,187.2 737.5,187.6 738.1,188.1 738.7,187.2 739.3,187.6 739.9,188.6 740.5,188.4 741.1,188.6 741.7,188.4 742.4,187.3 743.0,187.4 743.6,186.9 744.2,186.6 744.8,185.7 745.4,185.4 746.0,185.3 746.6,184.8 747.2,183.7 747.8,183.5 748.4,182.6 749.1,182.3 749.7,181.7 750.3,181.8 750.9,182.0 751.5,181.5 752.1,181.5 752.7,181.6 753.3,181.6 753.9,180.3 754.5,181.2 755.1,181.9 755.8,181.3 756.4,181.1 757.0,181.4 757.6,181.7 758.2,181.9 758.8,182.3 759.4,182.2 760.0,181.8 760.6,181.5 761.2,181.9 761.8,181.8 762.5,181.5 763.1,180.7 763.7,180.8 764.3,180.4 764.9,180.8 765.5,181.4 766.1,180.8 766.7,181.6 767.3,181.7 767.9,181.5 768.5,181.5 769.2,181.5 769.8,181.6 770.4,181.1 771.0,181.5 771.6,182.0 772.2,181.7 772.8,181.6 773.4,181.5 774.0,181.3 774.6,180.7 775.2,180.6 775.9,180.4 776.5,179.2 777.1,178.3 777.7,177.1 778.3,176.5 778.9,176.8 779.5,176.9 780.1,176.0" stroke="#1f8fe0" stroke-width="1.5"/>
    <path d="M49.5,176.2 86.3,351.4 89.9,350.4 93.6,350.5 97.2,348.2 100.9,345.6 104.6,342.9 108.2,340.6 111.9,339.9 115.5,337.9 119.2,336.8 122.8,336.0 126.5,335.7 130.1,333.6 133.8,332.4 137.5,332.1 141.1,331.2 144.8,331.5 148.4,329.4 152.1,330.1 155.7,330.0 159.4,329.5 163.0,327.2 166.7,326.4 170.3,325.3 174.0,322.9 177.7,322.7 181.3,322.0 185.0,322.9 188.6,321.7 192.3,319.9 195.9,319.5 199.6,318.3 203.2,319.7 206.9,319.6 210.6,319.7 214.2,318.5 217.9,316.2 221.5,315.0 225.2,313.1 228.8,312.3 232.5,310.6 236.1,310.1 239.8,307.9 243.4,308.1 247.1,307.2 250.8,305.9 254.4,306.2 258.1,302.7 261.7,301.8 265.4,301.3 269.0,299.8 272.7,298.6 276.3,297.0 280.0,294.0 283.7,293.0 287.3,291.4 291.0,290.2 294.6,290.9 298.3,290.2 301.9,288.9 305.6,288.2 309.2,288.2 312.9,288.6 316.5,289.9 320.2,289.5 323.9,290.2 327.5,289.1 331.2,289.6 334.8,290.1 338.5,289.6 342.1,289.9 345.8,288.5 349.4,287.0 353.1,284.9 356.8,283.9 360.4,283.3 364.1,281.5 367.7,279.5 371.4,277.7 375.0,277.3 378.7,276.9 382.3,276.5 386.0,275.3 389.6,274.4 393.3,273.1 397.0,271.5 400.6,272.9 404.3,270.6 407.9,270.2 411.6,268.5 415.2,267.2 418.9,266.7 422.5,266.6 426.2,266.3 429.9,264.8 433.5,263.3 437.2,261.0 440.8,261.8 444.5,260.4 448.1,260.6 451.8,259.3 455.4,256.5 459.1,254.5 462.7,254.6 466.4,255.0 470.1,255.3 473.7,254.5 477.4,252.2 481.0,250.1 484.7,248.6 488.3,248.9 492.0,248.7 495.6,249.4 499.3,248.2 503.0,247.4 506.6,244.6 510.3,244.5 513.9,243.6 517.6,243.6 521.2,243.3 524.9,240.7 528.5,241.5 532.2,239.0 535.8,238.3 539.5,236.9 543.2,236.9 546.8,235.1 550.5,236.1 554.1,234.7 557.8,233.9 561.4,235.4 565.1,233.9 568.7,233.5 572.4,230.5 576.1,229.1 579.7,229.2 583.4,227.9 587.0,224.8 590.7,224.9 594.3,223.8 598.0,221.5 601.6,218.7 605.3,216.7 608.9,216.8 612.6,216.5 616.3,215.5 619.9,216.2 623.6,216.0 627.2,215.6 630.9,213.5 634.5,211.0 638.2,211.4 641.8,211.5 645.5,210.7 649.2,210.5 652.8,208.6 656.5,207.0 660.1,206.8 663.8,204.2 667.4,204.5 671.1,206.0 674.7,207.1 678.4,206.6 682.0,204.7 685.7,203.0 689.4,203.4 693.0,201.4 696.7,200.7 700.3,202.3 704.0,199.6 707.6,199.1 711.3,195.8 714.9,195.3 718.6,193.6 722.3,191.8 725.9,190.7 729.6,190.8 733.2,189.0 736.9,187.2 740.5,188.4 744.2,186.6 747.8,183.5 751.5,181.5 755.1,181.9 758.8,182.3 762.5,181.5 766.1,180.8 769.8,181.6 773.4,181.5 777.1,178.3" stroke="#f26d2e" stroke-width="1.8"/>
    <path d="M49.5,176.2 50.3,182.6 50.9,189.1 51.6,195.7 52.2,201.8 52.8,208.0 53.4,213.4 54.0,217.8 54.6,223.0 55.2,228.2 55.8,232.5 56.4,236.7 57.0,240.9 57.7,245.6 58.3,249.5 58.9,252.9 59.5,257.3 60.1,261.1 60.7,265.5 61.3,269.4 61.9,273.5 62.5,276.5 63.1,280.0 63.7,282.4 64.4,284.8 65.0,287.4 65.6,291.2 66.2,293.7 66.8,295.8 67.4,297.7 68.0,300.5 68.6,302.6 69.2,304.9 69.8,307.0 70.4,307.9 71.1,309.9 71.7,311.3 72.3,312.2 72.9,313.9 73.5,315.2 74.1,316.4 74.7,317.5 75.3,319.4 75.9,320.4 76.5,320.6 77.1,322.5 77.8,322.9 78.4,323.8 79.0,325.0 79.6,324.6 80.2,325.0 80.8,326.5 81.4,327.1 82.0,327.5 82.6,328.3 83.2,328.5 83.8,329.1 84.5,329.3 85.1,329.0 85.7,330.0 86.3,330.4 86.9,331.1 87.5,331.5 88.1,332.6 88.7,333.4 89.3,333.8 89.9,333.6 90.5,333.2 91.2,334.3 91.8,335.1 92.4,334.9 93.0,336.3 93.6,336.7 94.2,336.9 94.8,336.3 95.4,336.0 96.0,336.3 96.6,336.6 97.2,336.8 97.9,335.9 98.5,336.2 99.1,336.4 99.7,336.2 100.3,336.3 100.9,336.4 101.5,337.0 102.1,337.0 102.7,337.2 103.3,336.3 103.9,335.9 104.6,335.8 105.2,335.3 105.8,335.4 106.4,334.6 107.0,334.5 107.6,334.0 108.2,334.7 108.8,334.4 109.4,335.3 110.0,336.4 110.6,336.4 111.3,336.7 111.9,336.4 112.5,334.8 113.1,335.1 113.7,335.3 114.3,335.0 114.9,334.5 115.5,334.5 116.1,334.4 116.7,333.8 117.3,333.4 118.0,333.8 118.6,333.7 119.2,333.5 119.8,334.0 120.4,333.7 121.0,334.0 121.6,333.2 122.2,332.9 122.8,332.7 123.4,332.9 124.0,332.8 124.7,333.9 125.3,334.3 125.9,333.9 126.5,334.9 127.1,334.2 127.7,335.0 128.3,334.2 128.9,334.5 129.5,333.7 130.1,333.4 130.8,334.1 131.4,333.1 132.0,332.0 132.6,331.8 133.2,331.8 133.8,331.7 134.4,332.1 135.0,331.2 135.6,331.3 136.2,331.2 136.8,331.5 137.5,331.6 138.1,332.2 138.7,331.2 139.3,331.1 139.9,330.3 140.5,330.1 141.1,330.3 141.7,330.3 142.3,330.5 142.9,330.3 143.5,330.3 144.2,330.3 144.8,331.0 145.4,331.2 146.0,330.0 146.6,330.2 147.2,330.6 147.8,330.2 148.4,329.1 149.0,329.8 149.6,329.7 150.2,329.9 150.9,330.8 151.5,330.1 152.1,329.9 152.7,329.6 153.3,329.9 153.9,329.3 154.5,329.5 155.1,329.3 155.7,329.8 156.3,330.3 156.9,329.2 157.6,329.3 158.2,328.9 158.8,328.7 159.4,328.8 160.0,328.9 160.6,328.2 161.2,328.2 161.8,328.1 162.4,327.9 163.0,326.9 163.6,326.3 164.3,325.9 164.9,326.1 165.5,326.8 166.1,326.0 166.7,325.3 167.3,325.2 167.9,324.7 168.5,324.1 169.1,323.4 169.7,322.8 170.3,323.0 171.0,321.9 171.6,322.6 172.2,322.0 172.8,321.6 173.4,321.0 174.0,319.8 174.6,318.8 175.2,319.6 175.8,320.6 176.4,320.0 177.0,320.6 177.7,320.6 178.3,320.0 178.9,320.9 179.5,322.1 180.1,321.8 180.7,321.6 181.3,321.6 181.9,321.4 182.5,321.8 183.1,322.6 183.7,322.5 184.4,322.9 185.0,323.7 185.6,323.1 186.2,322.9 186.8,322.3 187.4,322.7 188.0,322.9 188.6,323.2 189.2,323.5 189.8,323.0 190.4,323.2 191.1,322.7 191.7,322.2 192.3,320.6 192.9,321.2 193.5,320.4 194.1,320.2 194.7,320.0 195.3,320.7 195.9,320.7 196.5,319.9 197.1,319.7 197.8,319.4 198.4,319.4 199.0,318.4 199.6,318.2 200.2,319.3 200.8,319.5 201.4,320.5 202.0,322.2 202.6,322.2 203.2,320.9 203.9,320.5 204.5,320.9 205.1,321.2 205.7,320.1 206.3,319.6 206.9,319.3 207.5,319.0 208.1,318.7 208.7,317.9 209.3,317.2 209.9,316.9 210.6,317.3 211.2,316.7 211.8,316.9 212.4,315.9 213.0,316.5 213.6,316.3 214.2,316.1 214.8,316.7 215.4,315.3 216.0,314.2 216.6,314.3 217.3,313.6 217.9,313.2 218.5,314.7 219.1,314.3 219.7,314.2 220.3,313.9 220.9,314.4 221.5,314.4 222.1,314.3 222.7,313.3 223.3,312.9 224.0,312.8 224.6,311.6 225.2,311.9 225.8,312.0 226.4,313.0 227.0,311.9 227.6,311.1 228.2,310.4 228.8,309.9 229.4,309.8 230.0,309.6 230.7,309.7 231.3,309.8 231.9,309.7 232.5,308.6 233.1,308.3 233.7,308.3 234.3,308.6 234.9,309.0 235.5,307.9 236.1,307.6 236.7,307.6 237.4,307.8 238.0,308.5 238.6,308.5 239.2,307.9 239.8,308.1 240.4,308.2 241.0,308.3 241.6,308.2 242.2,309.1 242.8,309.2 243.4,309.6 244.1,308.9 244.7,309.2 245.3,308.7 245.9,307.5 246.5,307.6 247.1,307.8 247.7,307.5 248.3,307.4 248.9,307.8 249.5,307.3 250.1,305.8 250.8,305.8 251.4,305.7 252.0,306.2 252.6,305.7 253.2,306.3 253.8,306.7 254.4,305.6 255.0,305.9 255.6,304.9 256.2,303.6 256.8,303.2 257.5,302.6 258.1,301.1 258.7,301.0 259.3,301.2 259.9,301.8 260.5,301.5 261.1,300.3 261.7,299.4 262.3,299.8 262.9,300.1 263.5,300.1 264.2,299.6 264.8,299.4 265.4,299.0 266.0,298.5 266.6,298.4 267.2,298.2 267.8,297.8 268.4,297.5 269.0,296.9 269.6,295.5 270.2,294.9 270.9,294.6 271.5,295.5 272.1,295.0 272.7,296.1 273.3,296.7 273.9,295.8 274.5,295.1 275.1,294.9 275.7,295.8 276.3,295.7 277.0,295.8 277.6,295.1 278.2,293.3 278.8,292.9 279.4,293.2 280.0,293.7 280.6,293.5 281.2,293.3 281.8,293.8 282.4,293.5 283.0,294.0 283.7,293.0 284.3,292.1 284.9,291.2 285.5,291.3 286.1,290.8 286.7,290.7 287.3,290.9 287.9,290.9 288.5,291.6 289.1,292.4 289.7,291.7 290.4,291.6 291.0,291.3 291.6,290.5 292.2,291.5 292.8,291.9 293.4,291.6 294.0,291.2 294.6,291.3 295.2,290.4 295.8,290.2 296.4,290.9 297.1,291.3 297.7,290.7 298.3,290.2 298.9,291.4 299.5,290.4 300.1,289.9 300.7,288.9 301.3,289.1 301.9,289.3 302.5,290.0 303.1,288.2 303.8,288.4 304.4,287.3 305.0,287.8 305.6,287.7 306.2,288.8 306.8,289.1 307.4,288.4 308.0,289.3 308.6,288.5 309.2,288.3 309.8,289.0 310.5,289.3 311.1,289.6 311.7,289.6 312.3,289.9 312.9,290.4 313.5,290.6 314.1,291.2 314.7,291.9 315.3,291.8 315.9,291.1 316.5,292.0 317.2,291.9 317.8,292.1 318.4,292.6 319.0,291.9 319.6,292.0 320.2,290.8 320.8,291.2 321.4,290.7 322.0,290.7 322.6,291.0 323.2,290.4 323.9,290.3 324.5,289.7 325.1,289.5 325.7,290.0 326.3,289.8 326.9,289.6 327.5,288.7 328.1,289.1 328.7,288.8 329.3,289.7 329.9,289.0 330.6,289.5 331.2,290.4 331.8,290.1 332.4,289.0 333.0,289.7 333.6,290.1 334.2,290.2 334.8,290.5 335.4,289.9 336.0,290.0 336.6,290.1 337.3,289.3 337.9,289.4 338.5,288.7 339.1,288.9 339.7,289.3 340.3,290.1 340.9,288.3 341.5,288.1 342.1,287.5 342.7,287.1 343.3,286.6 344.0,286.2 344.6,284.5 345.2,284.9 345.8,285.6 346.4,285.8 347.0,286.3 347.6,285.4 348.2,284.4 348.8,284.7 349.4,285.2 350.1,285.0 350.7,283.7 351.3,285.2 351.9,284.4 352.5,284.7 353.1,283.5 353.7,283.8 354.3,283.6 354.9,284.2 355.5,284.4 356.1,283.0 356.8,282.0 357.4,281.9 358.0,282.1 358.6,282.9 359.2,282.7 359.8,282.3 360.4,281.9 361.0,281.6 361.6,281.9 362.2,281.5 362.8,281.1 363.5,279.8 364.1,278.2 364.7,278.0 365.3,278.2 365.9,277.9 366.5,278.0 367.1,278.2 367.7,277.9 368.3,278.3 368.9,277.5 369.5,277.3 370.2,276.8 370.8,276.6 371.4,276.8 372.0,277.1 372.6,277.0 373.2,277.0 373.8,276.6 374.4,276.2 375.0,276.9 375.6,276.5 376.2,277.1 376.9,277.2 377.5,277.0 378.1,278.1 378.7,277.6 379.3,277.1 379.9,276.9 380.5,276.8 381.1,276.7 381.7,277.0 382.3,276.9 382.9,276.9 383.6,276.4 384.2,276.9 384.8,276.4 385.4,275.9 386.0,275.7 386.6,275.6 387.2,274.9 387.8,275.8 388.4,275.1 389.0,274.6 389.6,274.1 390.3,273.6 390.9,273.7 391.5,273.6 392.1,272.9 392.7,272.4 393.3,272.0 393.9,272.8 394.5,272.2 395.1,271.2 395.7,270.3 396.3,270.0 397.0,270.9 397.6,270.0 398.2,270.0 398.8,271.6 399.4,271.1 400.0,271.9 400.6,272.5 401.2,272.7 401.8,271.6 402.4,271.6 403.0,271.2 403.7,269.7 404.3,268.5 404.9,268.4 405.5,268.4 406.1,269.2 406.7,269.5 407.3,269.0 407.9,268.6 408.5,268.4 409.1,267.5 409.7,267.9 410.4,267.8 411.0,267.2 411.6,266.7 412.2,265.8 412.8,265.5 413.4,265.6 414.0,265.3 414.6,265.9 415.2,267.0 415.8,266.5 416.4,266.4 417.1,266.0 417.7,267.1 418.3,267.2 418.9,267.4 419.5,267.9 420.1,269.2 420.7,269.2 421.3,268.3 421.9,267.8 422.5,268.0 423.2,267.8 423.8,267.1 424.4,268.8 425.0,268.6 425.6,268.0 426.2,267.3 426.8,265.9 427.4,264.9 428.0,264.5 428.6,264.2 429.2,263.5 429.9,263.8 430.5,263.7 431.1,263.0 431.7,261.5 432.3,261.6 432.9,261.5 433.5,261.3 434.1,260.4 434.7,260.4 435.3,259.3 435.9,260.0 436.6,260.1 437.2,260.2 437.8,259.6 438.4,258.8 439.0,259.9 439.6,260.5 440.2,260.2 440.8,260.6 441.4,261.6 442.0,260.7 442.6,260.3 443.3,259.8 443.9,260.1 444.5,259.3 445.1,259.4 445.7,258.5 446.3,259.1 446.9,259.6 447.5,259.4 448.1,259.8 448.7,259.2 449.3,258.9 450.0,259.4 450.6,259.2 451.2,259.4 451.8,258.6 452.4,258.9 453.0,259.1 453.6,258.1 454.2,256.4 454.8,254.9 455.4,254.9 456.0,254.7 456.7,253.6 457.3,253.8 457.9,254.5 458.5,254.4 459.1,254.0 459.7,254.6 460.3,255.7 460.9,256.6 461.5,256.0 462.1,256.5 462.7,256.4 463.4,256.1 464.0,255.6 464.6,255.7 465.2,255.2 465.8,255.7 466.4,255.8 467.0,256.4 467.6,255.4 468.2,255.3 468.8,255.7 469.4,255.7 470.1,255.7 470.7,255.0 471.3,256.0 471.9,256.5 472.5,256.6 473.1,254.5 473.7,253.7 474.3,253.6 474.9,252.9 475.5,251.4 476.1,251.4 476.8,251.6 477.4,250.7 478.0,250.2 478.6,249.7 479.2,250.0 479.8,248.6 480.4,247.3 481.0,247.0 481.6,246.5 482.2,248.0 482.8,247.5 483.5,247.6 484.1,247.3 484.7,246.8 485.3,247.1 485.9,248.2 486.5,247.9 487.1,248.4 487.7,248.5 488.3,248.9 488.9,249.0 489.5,250.5 490.2,249.5 490.8,249.1 491.4,248.2 492.0,246.6 492.6,246.5 493.2,247.8 493.8,248.3 494.4,249.0 495.0,249.2 495.6,248.9 496.3,250.1 496.9,249.7 497.5,250.5 498.1,250.0 498.7,249.8 499.3,249.8 499.9,249.6 500.5,249.7 501.1,249.9 501.7,250.8 502.3,250.5 503.0,248.8 503.6,247.2 504.2,246.0 504.8,245.3 505.4,245.6 506.0,244.4 506.6,244.3 507.2,244.2 507.8,244.3 508.4,244.1 509.0,244.3 509.7,244.2 510.3,244.8 510.9,244.8 511.5,243.0 512.1,242.9 512.7,242.9 513.3,242.4 513.9,241.7 514.5,242.4 515.1,242.4 515.7,241.6 516.4,241.2 517.0,241.0 517.6,239.8 518.2,240.1 518.8,240.0 519.4,240.2 520.0,239.0 520.6,240.3 521.2,240.7 521.8,240.9 522.4,240.2 523.1,239.6 523.7,238.4 524.3,239.4 524.9,238.7 525.5,238.8 526.1,239.1 526.7,238.5 527.3,239.0 527.9,240.4 528.5,240.4 529.1,241.2 529.8,241.4 530.4,240.8 531.0,240.3 531.6,238.8 532.2,238.7 532.8,239.6 533.4,239.9 534.0,240.2 534.6,240.8 535.2,240.1 535.8,240.3 536.5,241.4 537.1,240.5 537.7,240.2 538.3,239.6 538.9,239.1 539.5,238.4 540.1,238.0 540.7,236.8 541.3,236.2 541.9,235.7 542.5,235.2 543.2,236.0 543.8,235.9 544.4,235.8 545.0,235.4 545.6,236.1 546.2,234.6 546.8,234.3 547.4,235.0 548.0,236.0 548.6,235.9 549.2,235.6 549.9,235.9 550.5,235.5 551.1,235.6 551.7,234.9 552.3,235.2 552.9,234.9 553.5,233.9 554.1,231.7 554.7,232.3 555.3,232.4 555.9,232.8 556.6,232.0 557.2,232.6 557.8,232.7 558.4,232.5 559.0,233.0 559.6,233.4 560.2,233.5 560.8,234.7 561.4,235.4 562.0,235.4 562.6,234.9 563.3,234.7 563.9,235.6 564.5,235.6 565.1,234.6 565.7,233.8 566.3,233.5 566.9,233.9 567.5,233.1 568.1,233.2 568.7,233.7 569.4,234.0 570.0,232.6 570.6,232.1 571.2,231.0 571.8,231.1 572.4,230.1 573.0,230.3 573.6,230.2 574.2,228.2 574.8,227.4 575.4,227.7 576.1,227.6 576.7,227.2 577.3,226.2 577.9,226.5 578.5,227.7 579.1,227.7 579.7,227.5 580.3,227.3 580.9,226.2 581.5,225.8 582.1,225.1 582.8,225.9 583.4,225.1 584.0,223.5 584.6,222.9 585.2,222.7 585.8,222.6 586.4,221.3 587.0,222.0 587.6,222.1 588.2,221.8 588.8,221.2 589.5,221.6 590.1,221.4 590.7,221.6 591.3,221.5 591.9,221.7 592.5,222.5 593.1,222.5 593.7,221.8 594.3,222.5 594.9,222.6 595.5,222.1 596.2,222.8 596.8,222.6 597.4,223.3 598.0,222.4 598.6,220.6 599.2,219.1 599.8,219.3 600.4,218.7 601.0,218.7 601.6,218.6 602.2,217.5 602.9,218.6 603.5,217.8 604.1,217.9 604.7,216.9 605.3,216.8 605.9,217.4 606.5,217.2 607.1,216.7 607.7,216.7 608.3,216.4 608.9,216.9 609.6,218.5 610.2,217.8 610.8,217.2 611.4,217.1 612.0,217.1 612.6,216.3 613.2,216.6 613.8,217.1 614.4,217.3 615.0,216.3 615.6,217.4 616.3,216.4 616.9,216.9 617.5,217.6 618.1,216.6 618.7,216.6 619.3,217.5 619.9,217.7 620.5,216.9 621.1,215.9 621.7,216.2 622.3,215.8 623.0,215.2 623.6,215.7 624.2,215.3 624.8,215.3 625.4,215.6 626.0,215.9 626.6,215.8 627.2,215.7 627.8,216.0 628.4,216.2 629.0,215.2 629.7,215.0 630.3,214.2 630.9,213.2 631.5,212.7 632.1,211.0 632.7,211.6 633.3,211.0 633.9,211.3 634.5,209.9 635.1,208.7 635.7,210.2 636.4,211.0 637.0,210.5 637.6,209.9 638.2,209.3 638.8,209.4 639.4,209.1 640.0,208.6 640.6,208.7 641.2,207.9 641.8,209.7 642.5,209.2 643.1,210.0 643.7,209.2 644.3,209.3 644.9,210.0 645.5,209.6 646.1,210.2 646.7,210.8 647.3,211.9 647.9,211.7 648.5,211.2 649.2,210.2 649.8,210.2 650.4,209.3 651.0,209.2 651.6,209.1 652.2,208.6 652.8,207.6 653.4,207.8 654.0,207.9 654.6,207.9 655.2,207.8 655.9,208.3 656.5,207.4 657.1,207.6 657.7,207.1 658.3,207.6 658.9,207.2 659.5,206.8 660.1,207.0 660.7,205.3 661.3,204.9 661.9,203.5 662.6,202.7 663.2,203.2 663.8,203.5 664.4,203.1 665.0,203.0 665.6,203.0 666.2,203.1 666.8,204.4 667.4,204.5 668.0,206.1 668.6,205.6 669.3,206.0 669.9,206.3 670.5,206.3 671.1,205.9 671.7,206.7 672.3,207.8 672.9,208.4 673.5,209.6 674.1,210.0 674.7,208.4 675.3,208.8 676.0,208.0 676.6,208.7 677.2,208.1 677.8,208.0 678.4,207.7 679.0,206.9 679.6,205.2 680.2,204.8 680.8,204.5 681.4,205.0 682.0,204.2 682.7,204.2 683.3,203.2 683.9,203.0 684.5,201.5 685.1,202.8 685.7,202.8 686.3,201.8 686.9,201.9 687.5,202.3 688.1,202.2 688.7,203.0 689.4,202.6 690.0,200.5 690.6,199.4 691.2,200.0 691.8,200.5 692.4,200.6 693.0,199.5 693.6,200.0 694.2,200.3 694.8,199.3 695.4,198.4 696.1,198.5 696.7,199.2 697.3,200.1 697.9,200.4 698.5,201.8 699.1,200.9 699.7,201.0 700.3,200.3 700.9,198.6 701.5,197.4 702.1,198.1 702.8,197.1 703.4,196.0 704.0,196.4 704.6,196.9 705.2,196.8 705.8,197.8 706.4,196.4 707.0,198.0 707.6,198.6 708.2,198.4 708.8,198.3 709.5,197.8 710.1,197.3 710.7,197.2 711.3,196.0 711.9,197.4 712.5,197.0 713.1,197.3 713.7,196.8 714.3,196.4 714.9,196.8 715.6,196.9 716.2,196.0 716.8,195.4 717.4,195.6 718.0,193.7 718.6,191.7 719.2,192.6 719.8,192.2 720.4,190.0 721.0,189.3 721.6,189.0 722.3,189.1 722.9,189.4 723.5,189.4 724.1,189.7 724.7,189.0 725.3,189.2 725.9,189.4 726.5,190.1 727.1,190.0 727.7,190.5 728.3,190.4 729.0,189.4 729.6,188.9 730.2,188.3 730.8,187.9 731.4,187.7 732.0,187.6 732.6,187.7 733.2,186.9 733.8,187.6 734.4,186.4 735.0,186.2 735.7,186.6 736.3,186.9 736.9,187.2 737.5,186.9 738.1,187.2 738.7,186.1 739.3,186.6 739.9,188.1 740.5,188.4 741.1,189.7 741.7,189.4 742.4,188.2 743.0,187.4 743.6,188.2 744.2,188.5 744.8,186.8 745.4,186.2 746.0,186.0 746.6,184.9 747.2,182.8 747.8,181.6 748.4,181.4 749.1,181.0 749.7,180.5 750.3,180.9 750.9,181.6 751.5,181.5 752.1,182.1 752.7,182.0 753.3,181.8 753.9,179.8 754.5,180.4 755.1,180.4 755.8,180.4 756.4,180.0 757.0,179.0 757.6,179.4 758.2,179.9 758.8,181.1 759.4,181.7 760.0,181.1 760.6,180.9 761.2,181.5 761.8,181.6 762.5,181.4 763.1,180.8 763.7,181.1 764.3,181.1 764.9,182.3 765.5,183.0 766.1,181.4 766.7,182.9 767.3,182.9 767.9,182.4 768.5,182.4 769.2,182.8 769.8,182.5 770.4,182.2 771.0,182.0 771.6,183.2 772.2,182.9 772.8,183.3 773.4,183.3 774.0,182.8 774.6,181.9 775.2,180.9 775.9,181.0 776.5,179.9 777.1,178.7 777.7,177.6 778.3,176.3 778.9,176.3 779.5,176.2 780.1,175.4" stroke="#5ccc24" stroke-width="1.7"/>
  </g>
</svg>
<div class="lbl" style="right:756px;top:82px">1.5</div>
<div class="lbl" style="right:756px;top:135px">1.2</div>
<div class="lbl" style="right:756px;top:187px">0.9</div>
<div class="lbl" style="right:756px;top:240px">0.6</div>
<div class="lbl" style="right:756px;top:292px">0.3</div>
<div class="lbl" style="right:756px;top:345px">0</div>
<div class="lbl" style="right:756px;top:398px">-0.3</div>
<div class="lbl" style="left:73.5px;width:100px;text-align:center;top:443px">499.6</div>
<div class="lbl" style="left:219.5px;width:100px;text-align:center;top:443px">499.8</div>
<div class="lbl" style="left:365.5px;width:100px;text-align:center;top:443px">500</div>
<div class="lbl" style="left:511.5px;width:100px;text-align:center;top:443px">500.2</div>
<div class="lbl" style="left:658.5px;width:100px;text-align:center;top:443px">500.4</div>
<div class="lbl" style="left:365px;width:100px;text-align:center;top:457px">Time (s)</div>
<div class="lbl" style="left:-38px;top:258px;width:100px;text-align:center;transform:rotate(-90deg)">Amplitude</div>

<div class="status"></div>
<div class="st" style="left:3px">Processing</div>
<div class="st" style="right:3px">Frames = 500&nbsp; T = 500.499</div>
</body></html>
